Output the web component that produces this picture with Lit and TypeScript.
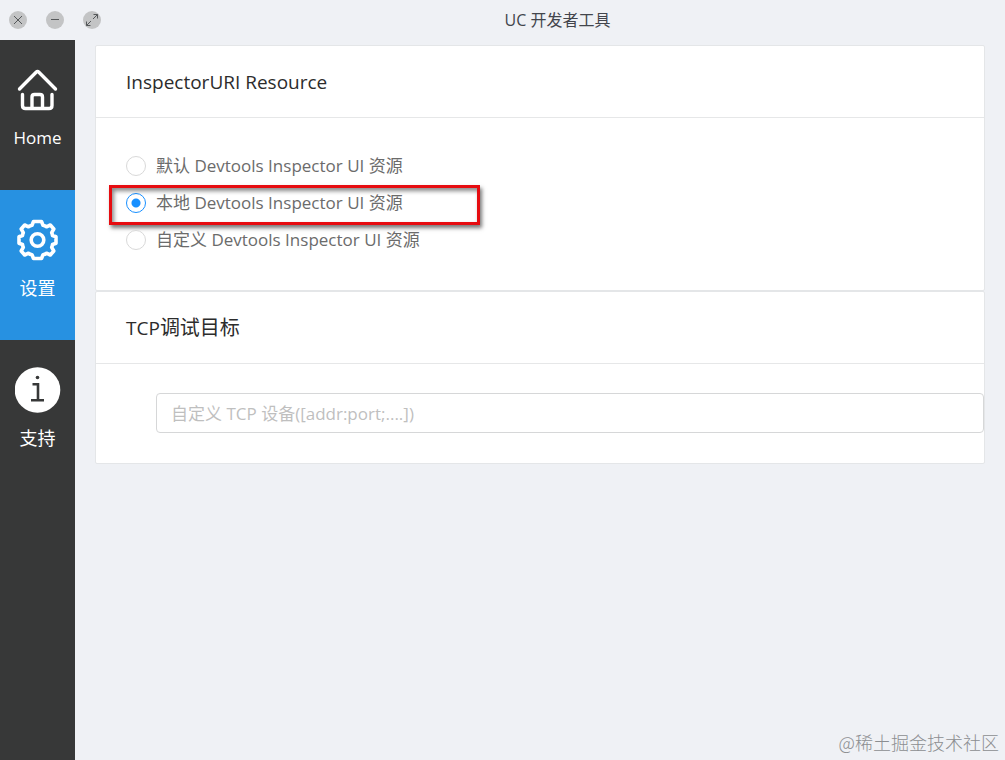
import { LitElement, html, css, svg } from "lit";
import { customElement, state } from "lit/decorators.js";
import { classMap } from "lit/directives/class-map.js";

const homeIcon = svg`<svg class="icon" viewBox="0 0 46 46" aria-hidden="true">
  <g fill="none" stroke="currentColor" stroke-width="3.4" stroke-linecap="round" stroke-linejoin="round">
    <path d="M4.500 22 21.100 5.200Q22.500 3.800 23.900 5.200L40.500 22"/>
    <path d="M7.500 27.500V38.500Q7.500 41.500 10.500 41.500H34Q37 41.500 37 38.500V27.500"/>
    <path d="M17 41V30Q17 27.500 19.500 27.500H25Q27.500 27.500 27.500 30V41"/>
  </g></svg>`;

const gearIcon = svg`<svg class="icon" viewBox="0 0 46 46" aria-hidden="true">
  <g fill="none" stroke="currentColor" stroke-width="3.6" stroke-linejoin="round" transform="translate(-.5 0)">
    <path d="M19 4.500H27L28.500 8.200Q30.500 8.700 32 9.800L35.800 8 39.300 12 37.200 15.700Q37.800 17 38 18.500L41.500 19.800V26.200L38 27.500Q37.800 29 37.200 30.300L39.300 34 35.800 38 32 36.200Q30.500 37.300 28.500 37.800L27 41.500H19L17.500 37.800Q15.500 37.300 14 36.200L10.200 38 6.700 34 8.800 30.300Q8.200 29 8 27.500L4.500 26.200V19.800L8 18.500Q8.200 17 8.800 15.700L6.700 12 10.200 8 14 9.800Q15.500 8.700 17.500 8.200Z"/>
    <circle cx="23" cy="23" r="6.300"/>
  </g></svg>`;

const infoIcon = svg`<svg class="icon" viewBox="0 0 46 46" aria-hidden="true">
  <circle cx="22.500" cy="23" r="22.800" fill="currentColor"/>
  <circle cx="22.500" cy="10.500" r="1.800" fill="#373838"/>
  <path d="M17.500 17.300H23V33.200M16 33.200H29" fill="none" stroke="#373838" stroke-width="2.600"/></svg>`;

@customElement("app-root")
export class AppRoot extends LitElement {
  @state() private page = "settings";
  @state() private source = "local";

  private pages = [
    { id: "home", label: "Home", lang: "en", icon: homeIcon },
    { id: "settings", label: "设置", lang: "zh", icon: gearIcon },
    { id: "support", label: "支持", lang: "zh", icon: infoIcon },
  ];

  private sources = [
    { id: "default", label: "默认 Devtools Inspector UI 资源" },
    { id: "local", label: "本地 Devtools Inspector UI 资源" },
    { id: "custom", label: "自定义 Devtools Inspector UI 资源" },
  ];

  static styles = css`
    :host {
      display: flex;
      flex-direction: column;
      min-height: 100vh;
      position: relative;
      background: #eff1f5;
      color: #2c2c2c;
      font-family: "Open Sans", "Noto Sans CJK SC", sans-serif;
      font-size: 17px;
    }
    * { box-sizing: border-box; }
    .titlebar {
      display: grid;
      grid-template-columns: 110px 1fr;
      align-items: center;
      height: 40px;
    }
    .controls { display: flex; gap: 19px; padding-left: 9px; }
    .control {
      width: 18px;
      height: 18px;
      padding: 0;
      border: 0;
      border-radius: 50%;
      background: #c3c4c5;
      color: #55585a;
    }
    .control svg { display: block; width: 18px; height: 18px; }
    .title {
      margin: 0;
      padding-bottom: 2px;
      font-size: 16px;
      font-weight: 400;
      text-align: center;
      color: #42454c;
    }
    .body { display: flex; flex: 1; }
    .sidebar { flex: none; width: 75px; background: #373838; }
    .tab {
      display: flex;
      flex-direction: column;
      align-items: center;
      gap: 12px;
      width: 100%;
      height: 150px;
      padding: 27px 0 0;
      border: 0;
      background: none;
      color: #fff;
      font: inherit;
      font-size: 18px;
      line-height: 26px;
    }
    .tab.active { background: #2791e1; }
    .tab-label:lang(en) { font-size: 17px; }
    .icon { display: block; width: 46px; height: 46px; }
    main { flex: 1; min-width: 0; padding: 5px 20px 0; }
    .card {
      margin: 0;
      border: 1px solid #e4e6e8;
      border-radius: 2px;
      background: #fff;
    }
    .heading {
      margin: 0;
      padding: 1px 30px 0;
      border-bottom: 1px solid #e6e7e8;
      font-size: 19px;
      font-weight: 500;
      line-height: 70px;
    }
    .heading-zh { font-size: 20px; font-weight: 400; }
    .options { padding: 29px 30px 32px; }
    .option {
      display: flex;
      align-items: center;
      gap: 10px;
      width: fit-content;
      height: 37px;
      color: #6b6b6b;
      position: relative;
    }
    .option-label { padding-bottom: 2px; }
    .radio {
      appearance: none;
      width: 20px;
      height: 20px;
      margin: 0;
      border: 1px solid #d9d9d9;
      border-radius: 50%;
      background: #fff;
    }
    .radio:checked {
      border-color: #1890ff;
      background: radial-gradient(circle, #1890ff 4px, #fff 5px);
    }
    .marker {
      position: absolute;
      top: 1px;
      left: -17px;
      width: 371px;
      height: 40px;
      border: 3px solid #e60c10;
      box-shadow: 2px 3px 4px #0008, inset 2px 3px 4px #0007;
      pointer-events: none;
    }
    .field { padding: 29px 0 30px 60px; }
    .device {
      display: block;
      width: 100%;
      height: 40px;
      padding: 0 14px;
      border: 1px solid #d6d7d8;
      border-radius: 4px;
      background: #fff;
      color: #555;
      font: inherit;
    }
    .device::placeholder { color: #bfbfbf; opacity: 1; }
    .watermark {
      position: absolute;
      right: 6px;
      bottom: 6px;
      font-family: "Noto Sans CJK SC", sans-serif;
      font-weight: 300;
      font-size: 18px;
      line-height: 24px;
      color: #8c8e91;
    }
  `;

  render() {
    return html`
      <header class="titlebar">
        <div class="controls">
          <button class="control" aria-label="Close"><svg viewBox="0 0 18 18"><path d="M5 5 13 13M13 5 5 13" stroke="currentColor" fill="none"/></svg></button>
          <button class="control" aria-label="Minimize"><svg viewBox="0 0 18 18"><path d="M5 8.500H13" stroke="currentColor" fill="none"/></svg></button>
          <button class="control" aria-label="Maximize"><svg viewBox="0 0 18 18"><path d="M10 8 14.500 3.500M10.500 3.500H14.500V7.500M8 10 3.500 14.500M3.500 10.500V14.500H7.500" stroke="currentColor" fill="none"/></svg></button>
        </div>
        <h1 class="title">UC 开发者工具</h1>
      </header>
      <div class="body">
        <nav class="sidebar">
          ${this.pages.map((p) => html`
            <button class=${classMap({ tab: true, active: p.id === this.page })} @click=${() => (this.page = p.id)}>
              ${p.icon}<span class="tab-label" lang=${p.lang}>${p.label}</span>
            </button>`)}
        </nav>
        <main>
          <section class="card">
            <h2 class="heading">InspectorURI Resource</h2>
            <div class="options">
              ${this.sources.map((s) => html`
                <label class="option">
                  <input class="radio" type="radio" name="source" .checked=${s.id === this.source}
                    @change=${() => (this.source = s.id)} />
                  <span class="option-label">${s.label}</span>
                  ${s.id === "local" ? html`<span class="marker"></span>` : null}
                </label>`)}
            </div>
          </section>
          <section class="card">
            <h2 class="heading">TCP<span class="heading-zh">调试目标</span></h2>
            <div class="field">
              <input class="device" type="text" aria-label="TCP调试目标" placeholder="自定义 TCP 设备([addr:port;....])" />
            </div>
          </section>
        </main>
      </div>
      <div class="watermark">@稀土掘金技术社区</div>
    `;
  }
}
